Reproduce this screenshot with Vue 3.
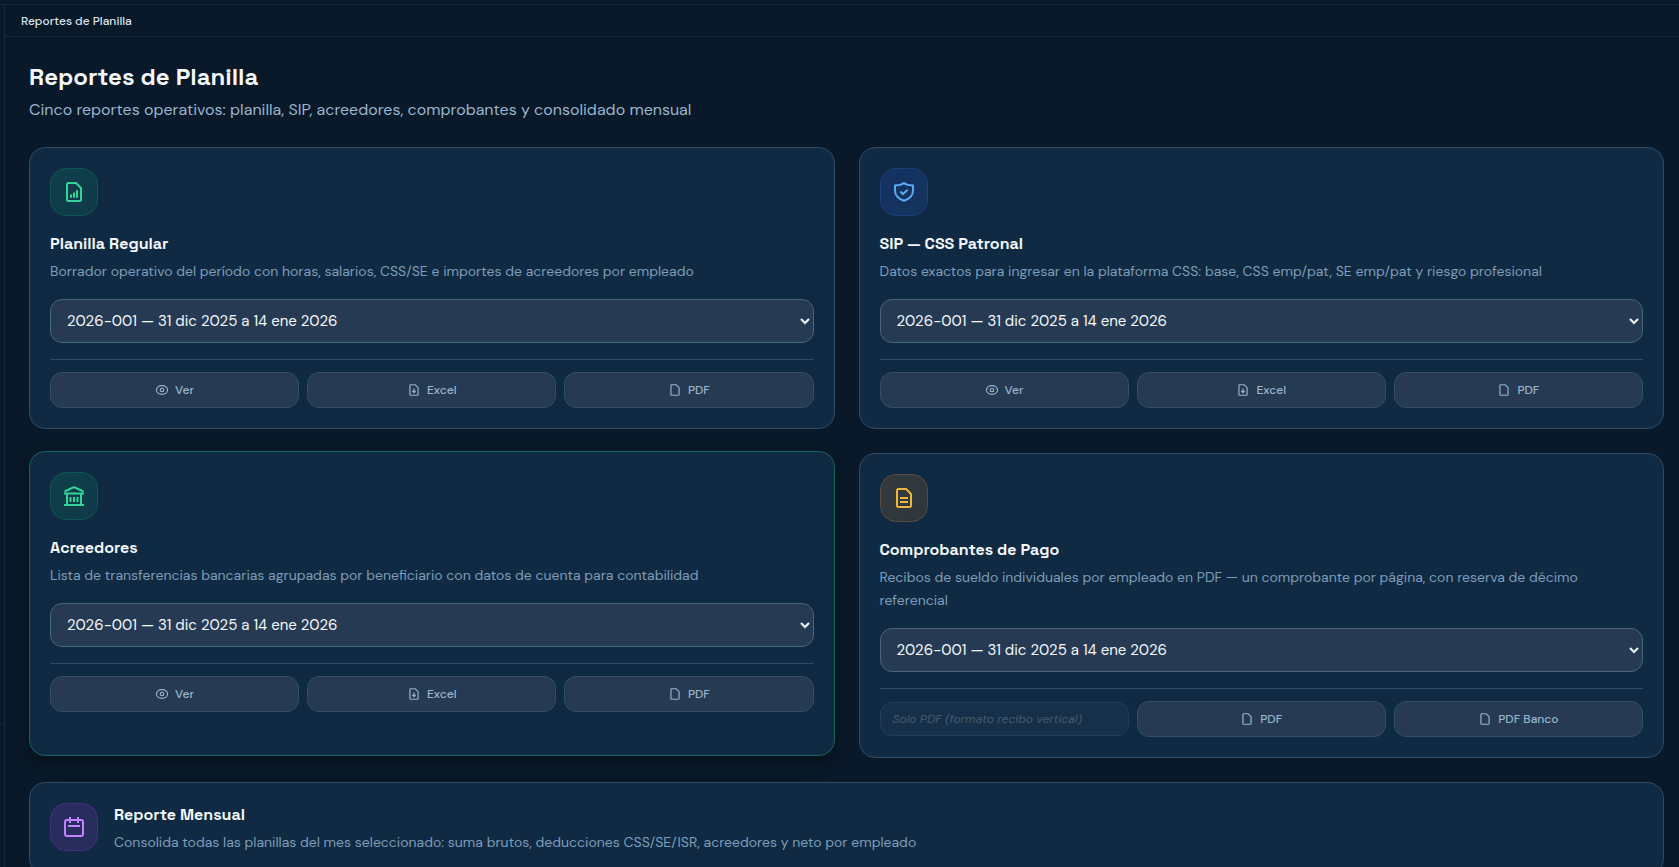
<template>
  <div class="shell">
    <div class="navbar"></div>
    <div class="workspace">
      <aside class="sidebar">
        <div class="sidebar-footer"></div>
      </aside>

      <div class="content">
        <header class="topbar">Reportes de Planilla</header>

        <main class="page">
          <div class="page-head">
            <h1 class="page-title">Reportes de Planilla</h1>
            <p class="page-subtitle">Cinco reportes operativos: planilla, SIP, acreedores, comprobantes y consolidado mensual</p>
          </div>

          <div class="grid">
            <section
              v-for="report in reports"
              :key="report.id"
              class="card"
              :class="{ 'card--active': active === report.id }"
            >
              <div class="badge" :class="`badge--${report.tone}`">
                <svg viewBox="0 0 24 24" class="badge-icon"><path :d="icons[report.icon]" /></svg>
              </div>
              <h2 :id="`titulo-${report.id}`" class="card-title">{{ report.title }}</h2>
              <p class="card-text">{{ report.text }}</p>

              <select v-model="selected[report.id]" class="period" :aria-labelledby="`titulo-${report.id}`">
                <option v-for="p in periods" :key="p.id" :value="p.id">{{ p.label }}</option>
              </select>

              <div class="actions">
                <template v-for="action in report.actions" :key="action.label">
                  <span v-if="action.note" class="note">{{ action.label }}</span>
                  <button v-else type="button" class="btn">
                    <svg viewBox="0 0 24 24" class="btn-icon"><path :d="icons[action.icon]" /></svg>
                    {{ action.label }}
                  </button>
                </template>
              </div>
            </section>

            <section class="card card--wide">
              <div class="badge badge--purple">
                <svg viewBox="0 0 24 24" class="badge-icon"><path :d="icons.calendar" /></svg>
              </div>
              <div>
                <h2 class="card-title">Reporte Mensual</h2>
                <p class="card-text">Consolida todas las planillas del mes seleccionado: suma brutos, deducciones CSS/SE/ISR, acreedores y neto por empleado</p>
              </div>
            </section>
          </div>
        </main>
      </div>
    </div>
  </div>
</template>

<script setup>
import { reactive, ref } from 'vue'

const active = ref('acreedores')

const periods = [
  { id: '2026-001', label: '2026-001 — 31 dic 2025 a 14 ene 2026' },
]

const selected = reactive({
  planilla: '2026-001',
  sip: '2026-001',
  acreedores: '2026-001',
  comprobantes: '2026-001',
})

const file = 'M6.5 3H14l5 5v11.5a1.5 1.5 0 0 1-1.5 1.5h-11A1.5 1.5 0 0 1 5 19.5v-15A1.5 1.5 0 0 1 6.5 3z'

const icons = {
  file,
  chart: `${file}M9 17.7v-3.2M12 17.7v-5.2M15 17.7v-7.4`,
  lines: `${file}M8 12h8M8 16h8`,
  download: `${file}M12 9.5v7M9 13.5l3 3 3-3`,
  shield: 'M12 3c-2.4 1.8-5.4 2.5-9 2.6v4.9c0 5 3.4 8.4 9 10.2 5.6-1.8 9-5.2 9-10.2V5.6c-3.6-.1-6.6-.8-9-2.6zM8.3 11.6l2.7 2.5 4.7-4.3',
  bank: 'M2.5 7.5L12 3.2l9.500 4.300M2 9.500h20M2 21h20M5 9.500V21M19 9.500V21M8.500 13v5M12 13v5M15.500 13v5',
  calendar: 'M5 5h14a2 2 0 0 1 2 2v12a2 2 0 0 1-2 2H5a2 2 0 0 1-2-2V7a2 2 0 0 1 2-2zM8 2v6M16 2v6M6 11h12',
  eye: 'M12 4.5c5.5 0 9.500 3.400 9.500 7.500s-4 7.500-9.500 7.500S2.500 16.100 2.500 12 6.500 4.500 12 4.500zM12 9a3 3 0 1 0 0 6 3 3 0 0 0 0-6z',
}

const exportActions = [
  { label: 'Ver', icon: 'eye' },
  { label: 'Excel', icon: 'download' },
  { label: 'PDF', icon: 'file' },
]

const reports = [
  {
    id: 'planilla',
    title: 'Planilla Regular',
    text: 'Borrador operativo del período con horas, salarios, CSS/SE e importes de acreedores por empleado',
    icon: 'chart',
    tone: 'green',
    actions: exportActions,
  },
  {
    id: 'sip',
    title: 'SIP — CSS Patronal',
    text: 'Datos exactos para ingresar en la plataforma CSS: base, CSS emp/pat, SE emp/pat y riesgo profesional',
    icon: 'shield',
    tone: 'blue',
    actions: exportActions,
  },
  {
    id: 'acreedores',
    title: 'Acreedores',
    text: 'Lista de transferencias bancarias agrupadas por beneficiario con datos de cuenta para contabilidad',
    icon: 'bank',
    tone: 'green',
    actions: exportActions,
  },
  {
    id: 'comprobantes',
    title: 'Comprobantes de Pago',
    text: 'Recibos de sueldo individuales por empleado en PDF — un comprobante por página, con reserva de décimo referencial',
    icon: 'lines',
    tone: 'amber',
    actions: [
      { label: 'Solo PDF (formato recibo vertical)', note: true },
      { label: 'PDF', icon: 'file' },
      { label: 'PDF Banco', icon: 'file' },
    ],
  },
]
</script>

<style>
body {
  margin: 0;
  background: #091929;
}
</style>

<style scoped>
.shell {
  display: flex;
  flex-direction: column;
  height: 100vh;
  overflow: hidden;
  background: #091929;
  color: #f4f7fa;
  font-family: "DM Sans", Inter, "Liberation Sans", sans-serif;
}

.shell *,
.shell {
  box-sizing: border-box;
}

.navbar {
  flex: none;
  height: 5px;
  border-bottom: 1px solid #152738;
}

.workspace {
  display: flex;
  flex: 1;
  min-height: 0;
}

.sidebar {
  display: flex;
  flex: none;
  flex-direction: column;
  justify-content: flex-end;
  width: 5px;
  border-right: 1px solid #152738;
}

.sidebar-footer {
  height: 143px;
  border-top: 1px solid #152738;
}

.content {
  display: flex;
  flex: 1;
  flex-direction: column;
  min-width: 0;
}

.topbar {
  flex: none;
  height: 32px;
  padding: 0 16px;
  border-bottom: 1px solid #152738;
  color: #d9e2ec;
  font-size: 12px;
  font-weight: 500;
  line-height: 32px;
}

.page {
  flex: 1;
  min-height: 0;
  padding: 24px 15px 24px 24px;
  overflow-y: auto;
  scrollbar-width: none;
}

.page-head {
  margin-bottom: 24px;
}

.page-title {
  margin: 0;
  font-family: "Space Grotesk", Inter, "Liberation Sans", sans-serif;
  font-size: 24px;
  font-weight: 700;
  line-height: 32px;
}

.page-subtitle {
  margin: 4px 0 0;
  color: #9ab5cd;
  font-size: 16px;
  line-height: 26px;
}

.grid {
  display: grid;
  grid-template-columns: repeat(2, minmax(0, 1fr));
  gap: 24px;
}

.card {
  padding: 20px;
  border: 1px solid #2f4b66;
  border-radius: 16px;
  background: #102a43;
}

/* Lifted card */
.card--active {
  border-color: #14665f;
  box-shadow: 0 6px 16px rgba(0, 0, 0, 0.35);
  transform: translateY(-2px);
}

.card--wide {
  display: flex;
  grid-column: 1 / -1;
  gap: 16px;
}

.badge {
  display: flex;
  flex: none;
  align-items: center;
  justify-content: center;
  width: 48px;
  height: 48px;
  margin-bottom: 16px;
  border: 1px solid;
  border-radius: 16px;
}

.card--wide .badge {
  margin-bottom: 0;
}

.badge--green {
  border-color: #0f5553;
  background: linear-gradient(135deg, #0f3f4a, #103a4a);
  color: #34d399;
}

.badge--blue {
  border-color: #1c3f78;
  background: linear-gradient(135deg, #143163, #14345c);
  color: #5aaaee;
}

.badge--amber {
  border-color: #5c4b40;
  background: linear-gradient(135deg, #343a3b, #2d373f);
  color: #edb83a;
}

.badge--purple {
  border-color: #452f7c;
  background: linear-gradient(135deg, #2b2c61, #262d5a);
  color: #c084fc;
}

.badge-icon,
.btn-icon {
  flex: none;
  fill: none;
  stroke: currentColor;
  stroke-width: 2;
}

.badge-icon {
  width: 24px;
  height: 24px;
}

.card-title {
  margin: 0;
  font-family: "Space Grotesk", Inter, "Liberation Sans", sans-serif;
  font-size: 16px;
  font-weight: 700;
  line-height: 24px;
}

.card-text {
  margin: 4px 0 0;
  color: #7d9db8;
  font-size: 14px;
  line-height: 23px;
}

.period {
  display: block;
  width: 100%;
  height: 44px;
  margin: 16px 0;
  padding: 0 0 0 12px;
  border: 1px solid #486581;
  border-radius: 12px;
  background: #263b53;
  color: #f4f7fa;
  font-family: inherit;
  font-size: 15px;
}

.actions {
  display: grid;
  grid-template-columns: repeat(3, minmax(0, 1fr));
  align-items: center;
  gap: 8px;
  padding-top: 12px;
  border-top: 1px solid #2f4b66;
}

.btn {
  display: flex;
  align-items: center;
  justify-content: center;
  gap: 6px;
  height: 36px;
  padding: 0 12px;
  border: 1px solid #334e68;
  border-radius: 12px;
  background: #263b53;
  color: #9ab5cd;
  font-family: inherit;
  font-size: 12px;
  font-weight: 500;
  cursor: pointer;
}

.btn-icon {
  width: 14px;
  height: 14px;
}

.note {
  height: 34px;
  padding: 0 12px;
  overflow: hidden;
  border: 1px solid #233e58;
  border-radius: 12px;
  background: #17304a;
  color: #465a70;
  font-size: 12px;
  font-style: italic;
  line-height: 32px;
  white-space: nowrap;
}
</style>
